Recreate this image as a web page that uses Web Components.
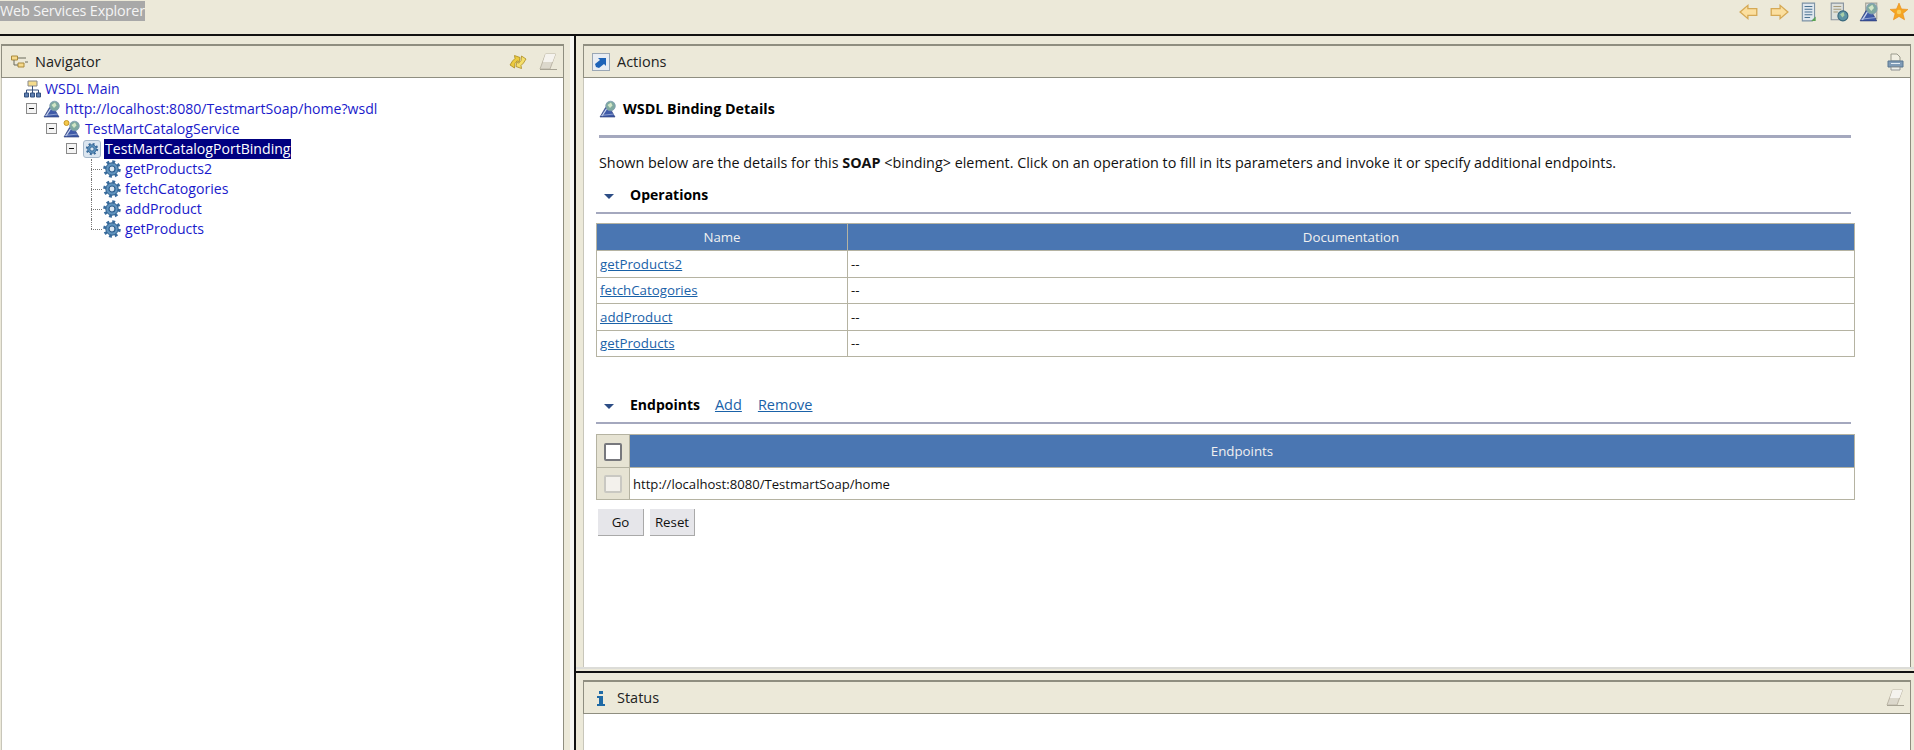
<!DOCTYPE html>
<html>
<head>
<meta charset="utf-8">
<title>Web Services Explorer</title>
<style>
html, body { margin: 0; height: 750px; overflow: hidden; background: #ece9d9; }
body { font-family: "Open Sans", "Noto Sans", sans-serif; font-size: 13px; color: #111; }
</style>
</head>
<body>
<ws-explorer>
	<ws-icon slot="tools" name="back"></ws-icon>
	<ws-icon slot="tools" name="forward"></ws-icon>
	<ws-icon slot="tools" name="notes"></ws-icon>
	<ws-icon slot="tools" name="docglobe"></ws-icon>
	<ws-icon slot="tools" name="bindingdoc"></ws-icon>
	<ws-icon slot="tools" name="star"></ws-icon>

	<ws-panel slot="nav" heading="Navigator" icon="navigator">
		<ws-icon slot="actions" name="refresh"></ws-icon>
		<ws-icon slot="actions" name="eraser"></ws-icon>
		<ws-tree>
			<ws-tree-node level="0" icon="main">WSDL Main</ws-tree-node>
			<ws-tree-node level="1" icon="binding" kind="open">http://localhost:8080/TestmartSoap/home?wsdl</ws-tree-node>
			<ws-tree-node level="2" icon="service" kind="open">TestMartCatalogService</ws-tree-node>
			<ws-tree-node level="3" icon="port" kind="open" selected>TestMartCatalogPortBinding</ws-tree-node>
			<ws-tree-node level="4" icon="gear" kind="leaf">getProducts2</ws-tree-node>
			<ws-tree-node level="4" icon="gear" kind="leaf">fetchCatogories</ws-tree-node>
			<ws-tree-node level="4" icon="gear" kind="leaf">addProduct</ws-tree-node>
			<ws-tree-node level="4" icon="gear" kind="last">getProducts</ws-tree-node>
		</ws-tree>
	</ws-panel>

	<ws-panel slot="actions" heading="Actions" icon="shortcut">
		<ws-icon slot="actions" name="print"></ws-icon>
		<ws-binding-details></ws-binding-details>
	</ws-panel>

	<ws-panel slot="status" heading="Status" icon="info">
		<ws-icon slot="actions" name="eraser"></ws-icon>
	</ws-panel>
</ws-explorer>

<script>
const gearTeeth = '<circle cx="9" cy="9" r="7" fill="none" stroke="#3a6d9e" stroke-width="3.600" stroke-dasharray="2.700 2.800"/>'
	+ '<circle cx="9" cy="9" r="6.200" fill="#5f93bd" stroke="#2f5f8e" stroke-width="1"/>'
	+ '<circle cx="9" cy="9" r="3" fill="#dbe8f2" stroke="#2f5f8e" stroke-width="1.200"/>';

const personGlobe = '<path d="M1 17 6.500 7.500h4L16 17z" fill="#3f5aa8" stroke="#27366f" stroke-width=".6"/>'
	+ '<path d="M3 16 7.500 9" stroke="#cfd9ee" stroke-width="1.200"/>'
	+ '<path d="M1.500 15.500 15 14" stroke="#9fb0d8" stroke-width=".8"/>'
	+ '<circle cx="11.500" cy="6" r="4.800" fill="#7fa9a0" stroke="#7f9cb4" stroke-width=".8"/>'
	+ '<path d="M8.500 5 12 2.500l1.500 3-2.500 2.500z" fill="#d2e6c6"/>';

// every small picture on the page, on an 18 unit grid
const icons = {
	back: '<path d="M1 9 8 3v3h8v6H8v3z" fill="#fbdf9f" stroke="#d5a955" stroke-width="1.200"/>',
	forward: '<path d="M17 9 10 3v3H2v6h8v3z" fill="#fbdf9f" stroke="#d5a955" stroke-width="1.200"/>',
	notes: '<path d="M3 1h11v14l-2 2H3z" fill="#dfe7ee" stroke="#7d93a5"/><path d="M5 4h7M5 6.500h7M5 9h7M5 11.500h7M5 14h5" stroke="#4b7392" stroke-width="1"/><path d="M11 17l4-4v4z" fill="#5aa255"/>',
	docglobe: '<path d="M2 1h11v15H2z" fill="#dde0dc" stroke="#8a95a0"/><path d="M4 4h7M4 6.500h7M4 9h4" stroke="#a59a7b"/><circle cx="12.500" cy="12.500" r="4.500" fill="#5d93a3" stroke="#38677c"/><path d="M10 11l3-2 1 3-2 2z" fill="#a9cfa7"/>',
	binding: personGlobe,
	bindingdoc: '<path d="M6 1h10v14H6z" fill="#dcdcd4" stroke="#a5a59a"/>' + personGlobe,
	star: '<path d="M9 1l2.200 5.300 5.800.4-4.500 3.700 1.500 5.600L9 13l-5 3 1.500-5.600L1 6.700l5.800-.4z" fill="#f5a623" stroke="#ea8e1c" stroke-width=".6"/><circle cx="9" cy="9" r="2" fill="#f9cf5f"/>',
	navigator: '<path d="M1.500 3h6v4h-6z" fill="#f6d98a" stroke="#a98a3d"/><path d="M8 10h6v4H8z" fill="#f6d98a" stroke="#a98a3d"/><path d="M4 7v5h4M8 5h8M15 9h3" stroke="#6a6a5a" fill="none"/>',
	refresh: '<path d="M1 12 3.500 8 6 5.500 5.500 2.500l5.500 2-1 5-1.500-1.800L6 10.500 5.500 15z" fill="#eccb3f" stroke="#a98a1f" stroke-width=".8"/><path d="M17 6l-2.500 4-2.500 2.500.5 3-5.500-2 1-5 1.500 1.800L12 7.500 12.500 3z" fill="#f5df6c" stroke="#a98a1f" stroke-width=".8"/>',
	eraser: '<path d="M6.500 1h10L11 16H1z" fill="#dcd8cc" stroke="#bcb6a6"/><path d="M6.500 1h10l-3 8h-9.500z" fill="#f5f3ee"/><path d="M1 16.500h17" stroke="#a8a495"/>',
	shortcut: '<rect x=".5" y=".5" width="17" height="17" fill="#e8edf3" stroke="#9aa7b5"/><path d="M4 14 3 11l5-4-2-2h8v8l-2-2-5 4z" fill="#1d63b8"/>',
	print: '<path d="M5 1h6l3 3v4H5z" fill="#f1efe2" stroke="#9a9a8c"/><path d="M2 8h15v6H2z" fill="#7f9bb6" stroke="#5b7690"/><path d="M5 10.500h9" stroke="#e5edf3"/><path d="M5 14h9v3H5z" fill="#eef0ea" stroke="#8b8f92"/>',
	info: '<path d="M7 2h4v3H7zM5 7h6v8h2v2H5v-2h2V9H5z" fill="#1f6aa5"/>',
	main: '<path d="M5 1h9v5H5z" fill="#f5dc8c" stroke="#8a8a8a"/><path d="M9.500 6v4M3.500 13v-3h12v3M9.500 10v3" stroke="#39527f" fill="none"/><path d="M1.500 13h4v4h-4zM7.500 13h4v4h-4zM13.500 13h4v4h-4z" fill="#5e7fb0" stroke="#33507f"/>',
	service: personGlobe + '<circle cx="3.500" cy="3" r="2.500" fill="#f5c94a" stroke="#c5962a"/>',
	port: '<rect x=".5" y=".5" width="17" height="17" rx="2.500" fill="#dce6f0" stroke="#a6b8ca"/><g transform="translate(2.700 2.700) scale(.7)">' + gearTeeth + '</g>',
	gear: gearTeeth
};

class WsIcon extends HTMLElement {
	connectedCallback() {
		const shadow = this.attachShadow({ mode: 'open' });
		shadow.innerHTML = `<style>
			:host { display: inline-flex; width: 18px; height: 18px; flex: none; }
			svg { width: 100%; height: 100%; display: block; }
		</style>
		<svg viewBox="0 0 18 18">${icons[this.getAttribute('name')]}</svg>`;
	}
}

const explorerTpl = document.createElement('template');
explorerTpl.innerHTML = `
<style>
:host { display: grid; grid-template-rows: 36px 1fr; height: 750px; width: 1914px; background: #ece9d9; }
.top {
	display: flex;
	justify-content: space-between;
	border-bottom: 2px solid #111;
	box-sizing: border-box;
	height: 36px;
}
.title {
	align-self: flex-start;
	margin-top: 1px;
	height: 20px;
	line-height: 20px;
	width: 145px;
	white-space: nowrap;
	background: #a8a8a8;
	color: #f4f4f4;
	font-size: 14.400px;
	letter-spacing: -.18px;
}
.tools { display: flex; gap: 10px; padding: 2px 5px 0 0; }
::slotted([slot=tools]) { width: 20px; height: 20px; }
.split { display: grid; grid-template-columns: 570px 4px 2px 1fr; height: 714px; }
.left { padding: 8px 6px 0 1px; display: flex; min-width: 0; }
.gap { background: #f6f6f2; }
.bar { background: #111; }
.right { display: grid; grid-template-rows: 633px 1fr; min-width: 0; }
.actions { padding: 8px 3px 0 7px; display: flex; min-height: 0; border-bottom: 2px solid #dcdcd8; }
.status { margin-top: 2px; border-top: 2px solid #111; padding: 7px 3px 0 7px; display: flex; min-height: 0; }
</style>
<div class="top">
	<div class="title">Web Services Explorer</div>
	<div class="tools"><slot name="tools"></slot></div>
</div>
<div class="split">
	<div class="left"><slot name="nav"></slot></div>
	<div class="gap"></div>
	<div class="bar"></div>
	<div class="right">
		<div class="actions"><slot name="actions"></slot></div>
		<div class="status"><slot name="status"></slot></div>
	</div>
</div>`;

class WsExplorer extends HTMLElement {
	connectedCallback() {
		this.attachShadow({ mode: 'open' }).appendChild(explorerTpl.content.cloneNode(true));
	}
}

const panelTpl = document.createElement('template');
panelTpl.innerHTML = `
<style>
:host { display: flex; flex-direction: column; flex: 1; min-width: 0; background: #fff; }
.head {
	display: flex;
	align-items: center;
	height: 34px;
	box-sizing: border-box;
	background: #ece9d9;
	border: 1px solid #8f8e80;
	border-top-width: 2px;
	padding: 0 6px 0 8px;
	font-size: 14.500px;
	color: #222;
}
.name { flex: 1; margin-left: 7px; }
.tools { display: flex; gap: 12px; }
.body { flex: 1; min-height: 0; border-left: 1px solid #c8c6ba; border-right: 1px solid #8f8e80; overflow: hidden; }
</style>
<div class="head">
	<span id="icon"></span>
	<span class="name"></span>
	<div class="tools"><slot name="actions"></slot></div>
</div>
<div class="body"><slot></slot></div>`;

class WsPanel extends HTMLElement {
	connectedCallback() {
		const shadow = this.attachShadow({ mode: 'open' });
		shadow.appendChild(panelTpl.content.cloneNode(true));
		shadow.querySelector('.name').textContent = this.getAttribute('heading');
		const icon = document.createElement('ws-icon');
		icon.setAttribute('name', this.getAttribute('icon'));
		shadow.getElementById('icon').appendChild(icon);
		shadow.getElementById('icon').style.display = 'flex';
	}
}

class WsTree extends HTMLElement {
	connectedCallback() {
		this.attachShadow({ mode: 'open' }).innerHTML = `<style>
			:host { display: block; padding-top: 1px; }
		</style><slot></slot>`;
	}
}

const nodeTpl = document.createElement('template');
nodeTpl.innerHTML = `
<style>
:host { display: flex; align-items: center; height: 20px; font-size: 14.100px; color: #1a1acb; white-space: nowrap; }
.exp { position: relative; width: 11px; height: 20px; flex: none; margin-right: 6px; }
.box {
	position: absolute; left: 0; top: 4px; width: 9px; height: 9px;
	border: 1px solid #8a8a8a; background: #f4f4f4;
}
.box::after { content: ''; position: absolute; left: 2px; top: 4px; width: 5px; height: 1px; background: #111; }
:host([kind=leaf]) .exp::before, :host([kind=last]) .exp::before {
	content: ''; position: absolute; left: 5px; top: 0; height: 20px; border-left: 1px dotted #777;
}
:host([kind=last]) .exp::before { height: 10px; }
:host([kind=leaf]) .exp::after, :host([kind=last]) .exp::after {
	content: ''; position: absolute; left: 5px; width: 11px; top: 10px; border-top: 1px dotted #777;
}
.label { margin-left: 3px; padding: 0 1px 0 1px; line-height: 20px; }
:host([selected]) .label { background: #000080; color: #fff; }
</style>
<div class="exp"></div>
<ws-icon></ws-icon>
<span class="label"><slot></slot></span>`;

class WsTreeNode extends HTMLElement {
	connectedCallback() {
		const shadow = this.attachShadow({ mode: 'open' });
		const frag = nodeTpl.content.cloneNode(true);
		// the icon reads its name when connected, so set it before appending
		frag.querySelector('ws-icon').setAttribute('name', this.getAttribute('icon'));
		if (this.getAttribute('kind') === 'open') {
			const box = document.createElement('div');
			box.className = 'box';
			frag.querySelector('.exp').appendChild(box);
		}
		shadow.appendChild(frag);
		this.style.marginLeft = (4 + 20 * Number(this.getAttribute('level'))) + 'px';
	}
}

const sectionTpl = document.createElement('template');
sectionTpl.innerHTML = `
<style>
:host { display: block; }
.head { display: flex; align-items: center; height: 36px; border-bottom: 2px solid #a4a8be; font-size: 14px; }
.arrow { width: 0; height: 0; margin: 5px 16px 0 8px; border: 5px solid transparent; border-top: 5px solid #2c4d85; border-bottom: 0; }
.name { font-weight: 700; margin-right: 15px; color: #000; }
::slotted(a) { margin-right: 16px; color: #1a62a8; font-size: 14.500px; }
</style>
<div class="head">
	<span class="arrow"></span>
	<span class="name"></span>
	<slot name="links"></slot>
</div>
<slot></slot>`;

class WsSection extends HTMLElement {
	connectedCallback() {
		const shadow = this.attachShadow({ mode: 'open' });
		shadow.appendChild(sectionTpl.content.cloneNode(true));
		shadow.querySelector('.name').textContent = this.getAttribute('heading');
	}
}

const detailsTpl = document.createElement('template');
detailsTpl.innerHTML = `
<style>
:host { display: block; padding: 0 55px 0 12px; font-size: 13.300px; color: #111; }
h1 { display: flex; align-items: center; gap: 6px; margin: 0 0 0 3px; height: 55px; padding-top: 6px; box-sizing: border-box; font-size: 14.300px; font-weight: 700; color: #000; }
hr { margin: 2px 4px 0 3px; border: 0; height: 3px; background: #a4a8be; }
p { margin: 15px 0 0 3px; line-height: 20px; white-space: nowrap; font-size: 14.370px; }
ws-section.ops { margin-top: 3px; margin-right: 4px; }
ws-section.eps { margin-top: 29px; margin-right: 4px; }
table { border-collapse: collapse; width: calc(100% + 4px); table-layout: fixed; margin-top: 9px; }
th { background: #4a76b2; color: #f0f0f0; font-weight: 400; border: 1px solid #b5b3a2; text-align: center; height: 26px; padding: 0; }
td { border: 1px solid #b5b3a2; height: 25.500px; padding: 0 3px; }
.eps table { margin-top: 10px; }
.eps th { height: 32px; }
.eps td { height: 31px; font-size: 13.100px; }
.eps .pick { background: #e6e3d3; padding: 0; text-align: center; }
.check { display: inline-block; width: 14px; height: 14px; vertical-align: middle; border-radius: 2px; background: #fff; border: 2px solid #77787d; }
.check.off { background: #f3f1ec; border-color: #c9c8c2; }
a { color: #1a62a8; }
.buttons { display: flex; gap: 6px; margin: 9px 0 0 2px; }
button { font: inherit; color: #111; height: 27px; padding: 0; background: #e6e6ea; border: 0; border-right: 1px solid #a9a9a9; border-bottom: 1px solid #a9a9a9; }
button.go { width: 46px; }
button.reset { width: 45px; }
</style>
<h1><ws-icon name="binding"></ws-icon>WSDL Binding Details</h1>
<hr>
<p>Shown below are the details for this <b>SOAP</b> &lt;binding&gt; element. Click on an operation to fill in its parameters and invoke it or specify additional endpoints.</p>
<ws-section class="ops" heading="Operations">
	<table>
		<colgroup><col style="width:251px"><col></colgroup>
		<tr><th>Name</th><th>Documentation</th></tr>
		<tr><td><a href="#">getProducts2</a></td><td>--</td></tr>
		<tr><td><a href="#">fetchCatogories</a></td><td>--</td></tr>
		<tr><td><a href="#">addProduct</a></td><td>--</td></tr>
		<tr><td><a href="#">getProducts</a></td><td>--</td></tr>
	</table>
</ws-section>
<ws-section class="eps" heading="Endpoints">
	<a slot="links" href="#">Add</a>
	<a slot="links" href="#">Remove</a>
	<table>
		<colgroup><col style="width:33px"><col></colgroup>
		<tr><th class="pick"><span class="check"></span></th><th>Endpoints</th></tr>
		<tr><td class="pick"><span class="check off"></span></td><td>http://localhost:8080/TestmartSoap/home</td></tr>
	</table>
</ws-section>
<div class="buttons">
	<button class="go">Go</button>
	<button class="reset">Reset</button>
</div>`;

class WsBindingDetails extends HTMLElement {
	connectedCallback() {
		this.attachShadow({ mode: 'open' }).appendChild(detailsTpl.content.cloneNode(true));
	}
}

customElements.define('ws-icon', WsIcon);
customElements.define('ws-explorer', WsExplorer);
customElements.define('ws-panel', WsPanel);
customElements.define('ws-tree', WsTree);
customElements.define('ws-tree-node', WsTreeNode);
customElements.define('ws-section', WsSection);
customElements.define('ws-binding-details', WsBindingDetails);
</script>
</body>
</html>
